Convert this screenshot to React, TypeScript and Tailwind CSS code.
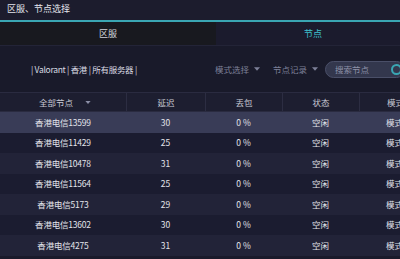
const ROWS = [
  { name: "香港电信13599", ping: 30 },
  { name: "香港电信11429", ping: 25 },
  { name: "香港电信10478", ping: 31 },
  { name: "香港电信11564", ping: 25 },
  { name: "香港电信5173", ping: 29 },
  { name: "香港电信13602", ping: 30 },
  { name: "香港电信4275", ping: 31 },
];

const COLS = "grid grid-cols-[126px_79px_77px_77px_1fr]";

function Caret() {
  return (
    <svg width="6" height="4" viewBox="0 0 7 4" className="ml-[5px] inline-block shrink-0">
      <path d="M0 0h7L3.5 4z" fill="#7d8098" />
    </svg>
  );
}

export default function App() {
  return (
    <div
      className="h-[259px] w-[400px] overflow-hidden bg-[#1a1a2b] text-[8.5px] text-[#d9dae3]"
      style={{ fontFamily: '"Noto Sans CJK SC", "Liberation Sans", sans-serif' }}
    >
      {/* Title */}
      <div className="flex h-[20px] items-center bg-[#1c1c2d] px-[7px] pb-[3px] text-[9px] text-[#e4e5ec]">
        区服、节点选择
      </div>
      <div className="h-[2px] bg-[#3aa6b3]" />

      {/* Tabs */}
      <div className="flex h-[24px] border-b border-[#232437] text-[9px]">
        <div className="flex w-[216px] items-center justify-center bg-[#18191f] text-[#d3d4dc]">
          区服
        </div>
        <div className="flex flex-1 items-center justify-center bg-[#1b1b2d] pl-[10px] text-[#3fc1cf]">
          节点
        </div>
      </div>

      {/* Filters */}
      <div className="flex h-[46px] items-center overflow-hidden whitespace-nowrap bg-[#191a2a] pl-[31px]">
        <span className="w-[184px] shrink-0 tracking-[-0.3px] text-[#d8d9e1]">
          | Valorant | 香港 | 所有服务器 |
        </span>
        <div className="flex shrink-0 items-center text-[#7d8098]">
          <span className="flex items-center">
            模式选择
            <Caret />
          </span>
          <span className="ml-[13px] flex items-center">
            节点记录
            <Caret />
          </span>
          <div className="relative ml-[7px] flex h-[17px] w-[80px] shrink-0 items-center rounded-full border border-[#4a4f68] bg-[#33374d] pl-[9px] text-[#8f92a8]">
            搜索节点
            <span className="absolute right-[2px] top-[2px] h-[11px] w-[11px] rounded-full border-2 border-[#3aa6b3]" />
          </div>
        </div>
      </div>

      {/* Header */}
      <div className={`${COLS} h-[20px] whitespace-nowrap border-y border-[#2a2b40] bg-[#1d1e30] text-[#c9cad5]`}>
        <div className="flex items-center justify-center pl-[4px]">
          全部节点
          <span className="ml-[12px]">
            <svg width="6" height="3" viewBox="0 0 7 4">
              <path d="M0 0h7L3.5 4z" fill="#8b8ea6" />
            </svg>
          </span>
        </div>
        <div className="flex items-center justify-center border-l border-[#2c2d42]">延迟</div>
        <div className="flex items-center justify-center border-l border-[#2c2d42]">丢包</div>
        <div className="flex items-center justify-center border-l border-[#2c2d42]">状态</div>
        <div className="flex items-center border-l border-[#2c2d42] pl-[27px]">模式</div>
      </div>

      {/* Rows */}
      {ROWS.map((r, i) => (
        <div
          key={r.name}
          className={`${COLS} h-[20.5px] items-center whitespace-nowrap ${
            i === 0 ? "bg-[#393c57]" : i % 2 === 1 ? "bg-[#1b1c30]" : "bg-[#222338]"
          } text-[#e2e3ea]`}
        >
          <div className="text-center tracking-[-0.2px]">{r.name}</div>
          <div className="text-center">{r.ping}</div>
          <div className="text-center">0 %</div>
          <div className="text-center">空闲</div>
          <div className="pl-[27px]">模式</div>
        </div>
      ))}
    </div>
  );
}
